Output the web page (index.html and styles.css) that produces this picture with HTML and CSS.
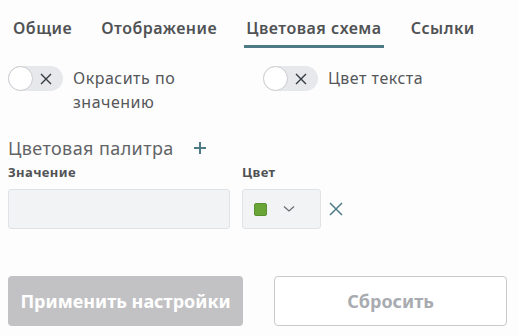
FILE: index.html
```html
<!DOCTYPE html>
<html>
<head>
  <title>Цветовая схема</title>
  <link rel="stylesheet" href="styles.css">
</head>
<body>
  <div class="tabs">
    <div class="tab">Общие</div>
    <div class="tab">Отображение</div>
    <div class="tab active">Цветовая схема</div>
    <div class="tab">Ссылки</div>
  </div>

  <div class="switches">
    <div class="switch-row">
      <div class="toggle">
        <span class="knob"></span>
        <svg class="toggle-x" width="12" height="12" viewBox="0 0 12 12"><path d="M1 1L11 11M11 1L1 11" stroke="#333a40" stroke-width="1.4" fill="none"/></svg>
      </div>
      <div class="switch-label">Окрасить по значению</div>
    </div>
    <div class="switch-row">
      <div class="toggle">
        <span class="knob"></span>
        <svg class="toggle-x" width="12" height="12" viewBox="0 0 12 12"><path d="M1 1L11 11M11 1L1 11" stroke="#333a40" stroke-width="1.4" fill="none"/></svg>
      </div>
      <div class="switch-label">Цвет текста</div>
    </div>
  </div>

  <div class="palette-title">
    Цветовая палитра
    <svg class="plus" width="14" height="14" viewBox="0 0 14 14"><path d="M7 1V13M1 7H13" stroke="#4d7b85" stroke-width="2" fill="none"/></svg>
  </div>

  <div class="palette-row">
    <div class="field value-field">
      <div class="field-label">Значение</div>
      <div class="input"></div>
    </div>
    <div class="field">
      <div class="field-label">Цвет</div>
      <div class="color-line">
        <div class="select">
          <span class="swatch"></span>
          <svg width="12" height="8" viewBox="0 0 12 8"><path d="M1 1.5L6 6L11 1.5" stroke="#666b70" stroke-width="1.2" fill="none"/></svg>
        </div>
        <svg class="remove" width="14" height="14" viewBox="0 0 14 14"><path d="M1 1L13 13M13 1L1 13" stroke="#4d7b85" stroke-width="1.5" fill="none"/></svg>
      </div>
    </div>
  </div>

  <div class="buttons">
    <button class="btn primary">Применить настройки</button>
    <button class="btn secondary">Сбросить</button>
  </div>
</body>
</html>
```

FILE: styles.css
```css
body {
  margin: 0;
  padding: 0 8px;
  background-color: #fdfdfe;
  font-family: "Noto Sans", sans-serif;
  color: #555759;
}

.tabs {
  display: flex;
  gap: 29px;
  padding: 17px 0 0 5px;
}

.tab {
  font-size: 16px;
  font-weight: 600;
  letter-spacing: 0.5px;
  color: #505254;
  padding-bottom: 6px;
  border-bottom: 3px solid transparent;
}

.tab.active {
  border-bottom-color: #4d7b85;
  padding: 0 2px 6px;
  margin: 0 -2px;
}

.switches {
  display: flex;
  margin-top: 18px;
}

.switch-row {
  display: flex;
  align-items: flex-start;
  flex: 0 0 255px;
}

.toggle {
  position: relative;
  width: 55px;
  height: 25px;
  border-radius: 13px;
  background-color: #e6e8ec;
  flex-shrink: 0;
}

.knob {
  position: absolute;
  left: 0;
  top: 0;
  width: 23px;
  height: 23px;
  border-radius: 50%;
  background-color: #fff;
  border: 1px solid #c9cbce;
}

.toggle-x {
  position: absolute;
  left: 32px;
  top: 6.5px;
}

.switch-label {
  margin-left: 10px;
  font-size: 16px;
  letter-spacing: 0.5px;
  line-height: 24px;
  width: 130px;
  color: #555759;
}

.palette-title {
  display: flex;
  align-items: center;
  margin-top: 22px;
  font-size: 18px;
  letter-spacing: 0.4px;
  color: #626466;
}

.plus {
  margin-left: 19px;
}

.palette-row {
  display: flex;
  gap: 12px;
  margin-top: 3px;
}

.field-label {
  font-size: 13px;
  font-weight: 700;
  letter-spacing: 0.4px;
  color: #505254;
  margin-bottom: 8px;
}

.value-field {
  width: 222px;
}

.input {
  height: 38px;
  background-color: #f2f3f4;
  border: 1px solid #dfe3e6;
  border-radius: 3px;
}

.color-line {
  display: flex;
  align-items: center;
}

.select {
  display: flex;
  align-items: center;
  width: 77px;
  height: 38px;
  background-color: #f2f3f4;
  border: 1px solid #dfe3e6;
  border-radius: 3px;
}

.swatch {
  width: 11px;
  height: 11px;
  margin: 0 16px 0 11px;
  background-color: #6aa538;
  border: 1px solid #5a9030;
  border-radius: 2px;
}

.remove {
  margin-left: 8px;
}

.buttons {
  display: flex;
  gap: 31px;
  margin-top: 47px;
}

.btn {
  height: 50px;
  border-radius: 4px;
  font-family: "Noto Sans", sans-serif;
  font-size: 18px;
  font-weight: 700;
}

.primary {
  width: 235px;
  background-color: #c2c2c5;
  color: #fff;
  border: none;
}

.secondary {
  width: 233px;
  background-color: #fff;
  color: #a8abb0;
  border: 1px solid #c8c9cc;
}
```
